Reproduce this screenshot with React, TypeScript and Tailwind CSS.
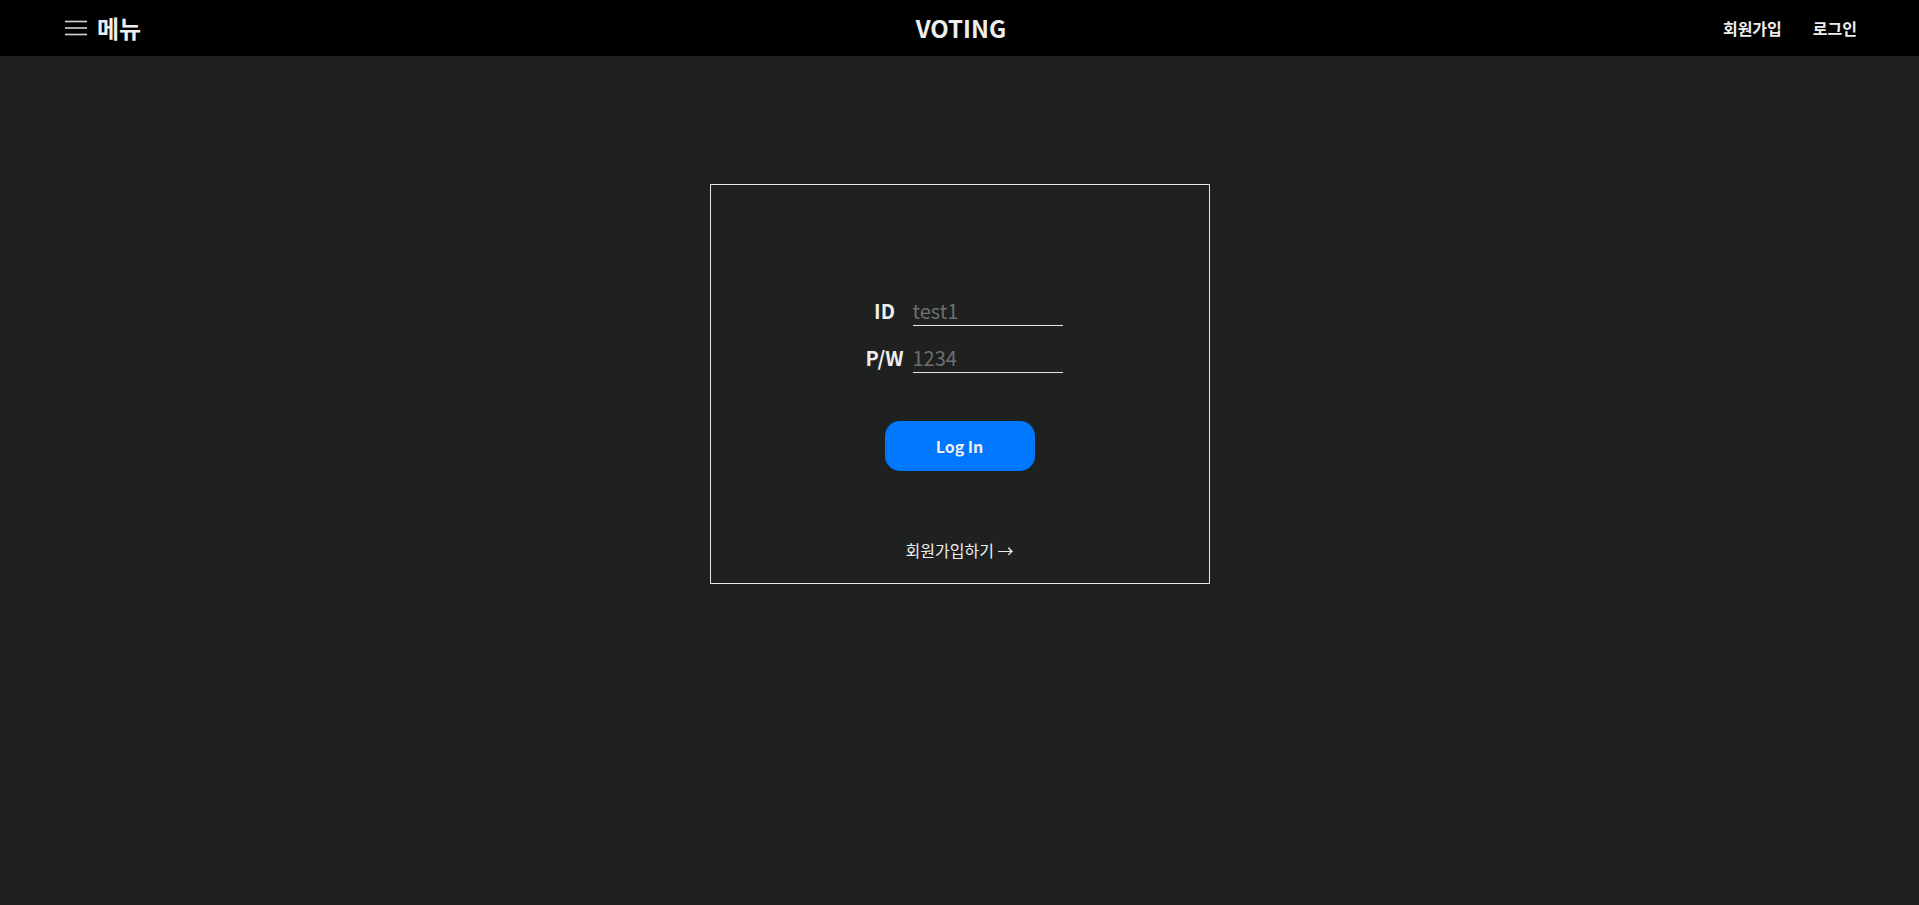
const font = { fontFamily: '"Noto Sans CJK KR", "Noto Sans", sans-serif' };

const MenuIcon = () => (
  <svg width="22" height="16" viewBox="0 0 22 16" fill="none">
    <line x1="0" y1="1.5" x2="22" y2="1.5" stroke="#d4d4d4" strokeWidth="1.6" />
    <line x1="0" y1="8" x2="22" y2="8" stroke="#d4d4d4" strokeWidth="1.6" />
    <line x1="0" y1="14.5" x2="22" y2="14.5" stroke="#d4d4d4" strokeWidth="1.6" />
  </svg>
);

const Field = ({ label, placeholder }: { label: string; placeholder: string }) => (
  <div className="flex items-center pl-[6px]">
    <span className="w-[44px] text-center text-[20px] font-bold text-[#eeeeee]">{label}</span>
    <input
      type="text"
      placeholder={placeholder}
      className="ml-[6px] h-[31px] w-[150px] border-b border-[#e5e5e5] bg-transparent text-[20px] text-white outline-none placeholder:text-[#6f6f6f]"
    />
  </div>
);

export default function App() {
  return (
    <div className="min-h-screen bg-[#1f2020]" style={font}>
      <header className="grid h-[56px] grid-cols-3 items-center bg-black pl-[65px] pr-[62px]">
        <div className="flex items-center gap-[10px]">
          <MenuIcon />
          <span className="text-[24px] font-bold text-[#eeeeee]">메뉴</span>
        </div>
        <div className="flex justify-center">
          <span className="text-[24px] font-bold text-[#eeeeee]">VOTING</span>
        </div>
        <nav className="flex justify-end gap-[31px] text-[16px] font-bold text-[#eeeeee]">
          <a href="#">회원가입</a>
          <a href="#">로그인</a>
        </nav>
      </header>

      <main className="flex justify-center pt-[128px]">
        <div className="flex h-[400px] w-[500px] flex-col items-center border border-[#e8e8e8] pt-[110px]">
          <div className="flex flex-col gap-[16px]">
            <Field label="ID" placeholder="test1" />
            <Field label="P/W" placeholder="1234" />
          </div>
          <button className="mt-[48px] h-[50px] w-[150px] rounded-[15px] bg-[#0077ff] text-[16px] font-bold text-[#eeeeee]">
            Log In
          </button>
          <a href="#" className="mt-[67px] text-[16px] leading-[24px] text-[#eeeeee]">
            회원가입하기 →
          </a>
        </div>
      </main>
    </div>
  );
}
